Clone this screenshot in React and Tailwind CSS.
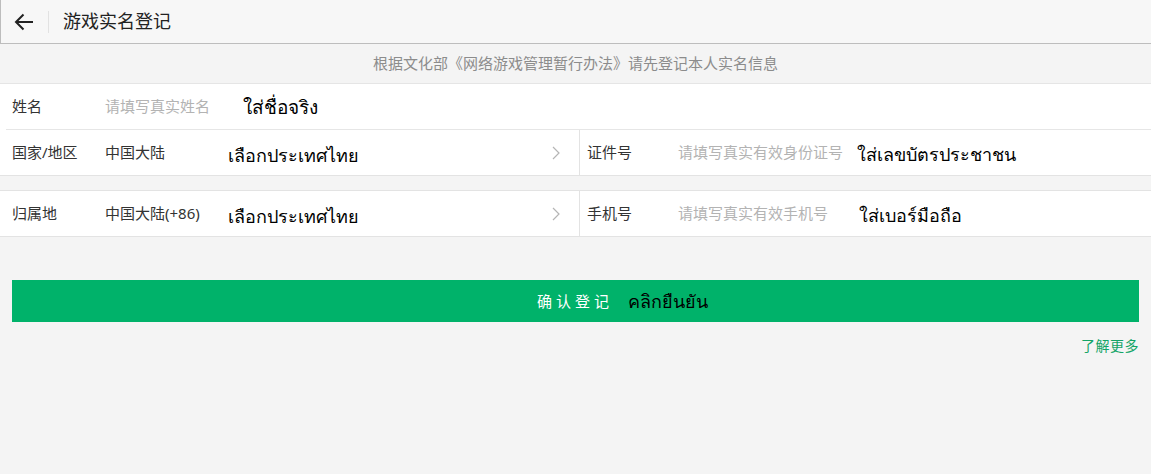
import React from "react";

const font = {
  fontFamily: '"Noto Sans", "Noto Sans CJK SC", sans-serif',
};

const Chevron = () => (
  <svg width="8" height="14" viewBox="0 0 8 14" className="shrink-0">
    <polyline
      points="1,1 7,7 1,13"
      fill="none"
      stroke="#b5b5b5"
      strokeWidth="1.2"
    />
  </svg>
);

const Thai = ({ children, className = "" }) => (
  <span
    className={`text-[18px] font-medium text-black leading-none ${className}`}
  >
    {children}
  </span>
);

const SelectCell = ({ label, value, thai }) => (
  <div className="flex items-center h-full pl-3 pr-[19px] border-r border-[#e3e3e3]">
    <span className="w-[93px] text-[15px] text-[#333]">{label}</span>
    <span className="w-[123px] text-[15px] text-[#333]">{value}</span>
    <Thai className="pt-[5px]">{thai}</Thai>
    <div className="flex-1" />
    <Chevron />
  </div>
);

const InputCell = ({ label, placeholder, thai, thaiGap }) => (
  <div className="flex items-center h-full pl-[7px]">
    <span className="w-[91px] text-[15px] text-[#333]">{label}</span>
    <span className="text-[15px] text-[#b3b3b3]">{placeholder}</span>
    <Thai className={`pt-[3px] ${thaiGap}`}>{thai}</Thai>
  </div>
);

export default function App() {
  return (
    <div className="min-h-screen bg-[#f4f4f4]" style={font}>
      {/* HEADER */}
      <div className="h-[44px] flex items-center bg-[#f7f7f7] border-l border-b border-[#bdbdbd]">
        <div className="w-[47px] flex justify-center pr-[2px]">
          <svg width="20" height="18" viewBox="0 0 20 18">
            <path
              d="M19 9H2M9.5 1.5L2 9l7.5 7.5"
              fill="none"
              stroke="#222"
              strokeWidth="2"
            />
          </svg>
        </div>
        <div className="w-px h-[22px] bg-[#e2e2e2]" />
        <span className="ml-[14px] text-[18px] text-[#222]">游戏实名登记</span>
      </div>

      {/* NOTICE */}
      <div className="h-[40px] flex items-center justify-center border-b border-[#e5e5e5] text-[15px] text-[#8c8c8c]">
        根据文化部《网络游戏管理暂行办法》请先登记本人实名信息
      </div>

      {/* NAME */}
      <div className="bg-white">
        <div className="ml-[6px] h-[46px] flex items-center pl-[6px] border-b border-[#e6e6e6]">
          <span className="w-[93px] text-[15px] text-[#333]">姓名</span>
          <span className="w-[138px] text-[15px] text-[#b3b3b3]">
            请填写真实姓名
          </span>
          <Thai className="pt-[2px] text-[19px]">ใส่ชื่อจริง</Thai>
        </div>
        <div className="grid grid-cols-[580px_1fr] h-[46px] border-b border-[#e3e3e3]">
          <SelectCell label="国家/地区" value="中国大陆" thai="เลือกประเทศไทย" />
          <InputCell
            label="证件号"
            placeholder="请填写真实有效身份证号"
            thai="ใส่เลขบัตรประชาชน"
            thaiGap="ml-[14px]"
          />
        </div>
      </div>

      <div className="h-[14px]" />

      {/* PHONE */}
      <div className="bg-white border-t border-b border-[#e3e3e3]">
        <div className="grid grid-cols-[580px_1fr] h-[45px]">
          <SelectCell
            label="归属地"
            value="中国大陆(+86)"
            thai="เลือกประเทศไทย"
          />
          <InputCell
            label="手机号"
            placeholder="请填写真实有效手机号"
            thai="ใส่เบอร์มือถือ"
            thaiGap="ml-[31px]"
          />
        </div>
      </div>

      {/* SUBMIT */}
      <div className="px-3 pt-[43px]">
        <button className="w-full h-[42px] bg-[#00b26a] flex items-center justify-center">
          <span className="text-[15px] text-white tracking-[4px] ml-[94px]">
            确认登记
          </span>
          <span className="ml-[15px] text-[18px] font-medium text-black">
            คลิกยืนยัน
          </span>
        </button>
        <div className="flex justify-end pt-[13px]">
          <span className="text-[14px] text-[#12a467] tracking-[0.5px]">
            了解更多
          </span>
        </div>
      </div>
    </div>
  );
}
